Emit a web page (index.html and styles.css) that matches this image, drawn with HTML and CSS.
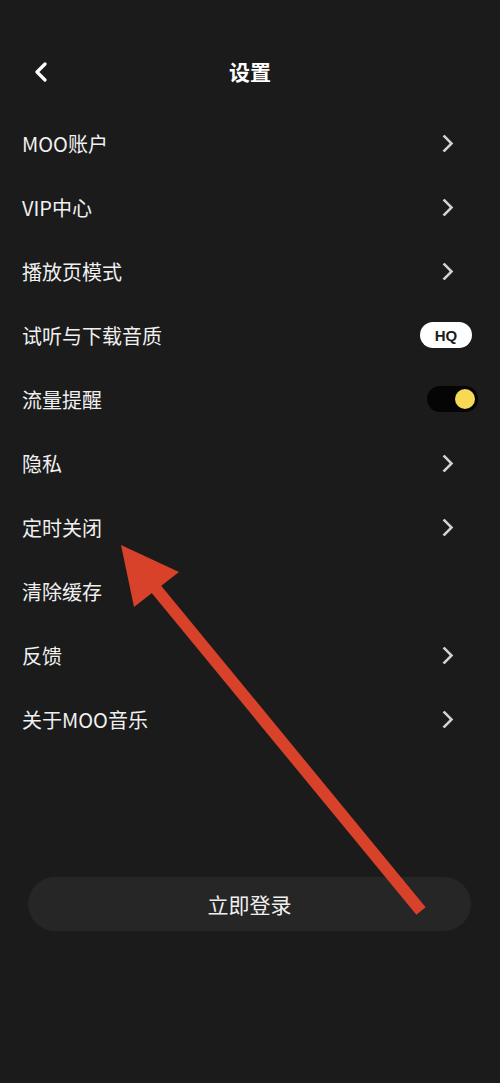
FILE: index.html
```html
<!DOCTYPE html>
<html lang="zh-CN">
<head>
    <meta charset="UTF-8">
    <meta name="viewport" content="width=device-width, initial-scale=1.0">
    <title>设置</title>
    <link rel="stylesheet" href="styles.css">
</head>
<body>
    <div class="page">
        <div class="header">
            <span class="back">
                <svg width="14" height="20" viewBox="0 0 14 20"><path d="M11 2 L3 10 L11 18" fill="none" stroke="#fff" stroke-width="3.2" stroke-linecap="round" stroke-linejoin="round"/></svg>
            </span>
            <h1 class="title">设置</h1>
        </div>

        <ul class="settings">
            <li class="row"><span>MOO账户</span><span class="chev"></span></li>
            <li class="row"><span>VIP中心</span><span class="chev"></span></li>
            <li class="row"><span>播放页模式</span><span class="chev"></span></li>
            <li class="row"><span>试听与下载音质</span><span class="hq">HQ</span></li>
            <li class="row"><span>流量提醒</span><span class="toggle"><span class="knob"></span></span></li>
            <li class="row"><span>隐私</span><span class="chev"></span></li>
            <li class="row"><span>定时关闭</span><span class="chev"></span></li>
            <li class="row"><span>清除缓存</span></li>
            <li class="row"><span>反馈</span><span class="chev"></span></li>
            <li class="row"><span>关于MOO音乐</span><span class="chev"></span></li>
        </ul>

        <button class="login-btn">立即登录</button>

        <!-- annotation arrow on top of the screenshot -->
        <svg class="arrow" width="500" height="1083" viewBox="0 0 500 1083">
            <line x1="152" y1="584" x2="421" y2="911" stroke="#d8412a" stroke-width="12"/>
            <polygon points="121,545 179,572 134,607" fill="#d8412a"/>
        </svg>
    </div>
</body>
</html>
```

FILE: styles.css
```css
body {
    margin: 0;
    background-color: #1b1b1b;
    font-family: "Noto Sans CJK SC", "Noto Sans", sans-serif;
    color: #f0f0f0;
}

.page {
    position: relative;
    width: 500px;
    height: 1083px;
    overflow: hidden;
}

.header {
    position: relative;
    height: 64px;
    margin-top: 39px;
    display: flex;
    align-items: center;
    justify-content: center;
}

.back {
    position: absolute;
    left: 34px;
    top: 23px;
    display: flex;
}

.title {
    margin: 0;
    font-size: 21px;
    font-weight: 700;
    color: #fff;
}

.settings {
    list-style: none;
    margin: 8px 0 0 0;
    padding: 0;
}

.row {
    height: 64px;
    padding: 0 22px;
    display: flex;
    align-items: center;
    justify-content: space-between;
    font-size: 20px;
}

.chev {
    width: 10px;
    height: 10px;
    margin-right: 27px;
    border-top: 3px solid #d0d0d0;
    border-right: 3px solid #d0d0d0;
    border-radius: 1px;
    transform: rotate(45deg);
}

.hq {
    width: 52px;
    height: 26px;
    margin-right: 6px;
    border-radius: 13px;
    background: #fff;
    color: #1b1b1b;
    font-family: "Liberation Sans", Arial, sans-serif;
    font-weight: 700;
    font-size: 15px;
    display: flex;
    align-items: center;
    justify-content: center;
}

.toggle {
    width: 51px;
    height: 26px;
    margin-right: 0;
    border-radius: 13px;
    background: #050505;
    display: flex;
    align-items: center;
    justify-content: flex-end;
    padding: 0 3px;
    box-sizing: border-box;
}

.knob {
    width: 20px;
    height: 20px;
    border-radius: 50%;
    background: #f7d954;
}

.login-btn {
    display: block;
    width: 443px;
    height: 54px;
    margin: 126px 0 0 28px;
    border: none;
    border-radius: 27px;
    background: #262626;
    color: #f0f0f0;
    font-family: inherit;
    font-size: 21px;
}

.arrow {
    position: absolute;
    left: 0;
    top: 0;
    pointer-events: none;
}
```
